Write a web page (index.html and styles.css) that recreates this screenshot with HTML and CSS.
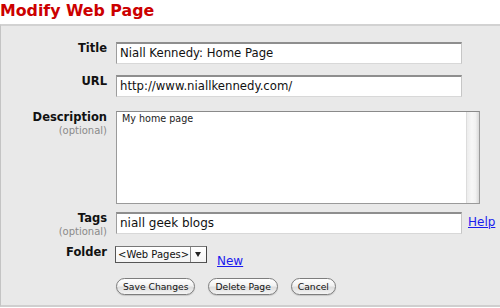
FILE: index.html
```html
<!DOCTYPE html>
<html>
<head>
<meta charset="utf-8">
<title>Modify Web Page</title>
<link rel="stylesheet" href="styles.css">
</head>
<body>
<h1 class="title">Modify Web Page</h1>
<form class="panel">
  <div class="row row-title">
    <div class="label"><span class="name">Title</span></div>
    <div class="field"><div class="input">Niall Kennedy: Home Page</div></div>
  </div>
  <div class="row row-url">
    <div class="label"><span class="name">URL</span></div>
    <div class="field"><div class="input">http://www.niallkennedy.com/</div></div>
  </div>
  <div class="row row-desc">
    <div class="label"><span class="name">Description</span><span class="opt">(optional)</span></div>
    <div class="field">
      <div class="textarea"><div class="ta-text">My home page</div><div class="scroll"></div></div>
    </div>
  </div>
  <div class="row row-tags">
    <div class="label"><span class="name">Tags</span><span class="opt">(optional)</span></div>
    <div class="field"><div class="input input-tags">niall geek blogs</div><a class="link help" href="#">Help</a></div>
  </div>
  <div class="row row-folder">
    <div class="label"><span class="name">Folder</span></div>
    <div class="field">
      <div class="select"><span class="sel-text">&lt;Web Pages&gt;</span><span class="sel-arrow"></span></div>
      <a class="link new" href="#">New</a>
    </div>
  </div>
  <div class="row row-buttons">
    <div class="label"></div>
    <div class="field buttons">
      <button type="button" class="btn">Save Changes</button>
      <button type="button" class="btn">Delete Page</button>
      <button type="button" class="btn">Cancel</button>
    </div>
  </div>
</form>
</body>
</html>
```
FILE: styles.css
```css
html, body {
  margin: 0;
  padding: 0;
  background: #ffffff;
  font-family: "DejaVu Sans", Verdana, sans-serif;
}
.title {
  margin: 0;
  padding: 1px 0 0 0;
  height: 23px;
  font-size: 15.8px;
  line-height: 20px;
  font-weight: bold;
  color: #cc0000;
}
.panel {
  display: flex;
  flex-direction: column;
  background: #e9e9e9;
  border-top: 2px solid #d2d2d2;
  border-left: 1px solid #c4c4c4;
  border-bottom: 2px solid #cfcfcf;
  padding: 16px 0 10px 0;
}
.row {
  display: flex;
  align-items: flex-start;
}
.label {
  width: 106px;
  flex: none;
  margin-right: 9px;
  display: flex;
  flex-direction: column;
  align-items: flex-end;
  text-align: right;
}
.name {
  font-weight: bold;
  font-size: 11.5px;
  line-height: 14px;
  color: #111;
  margin-top: -1px;
}
.opt {
  font-size: 10px;
  line-height: 13px;
  color: #8a8a8a;
}
.field {
  display: flex;
  align-items: flex-start;
}
.input {
  width: 346px;
  height: 22px;
  box-sizing: border-box;
  background: #fff;
  border: 1px solid #a9a9a9;
  border-top: 2px solid #8e8e8e;
  border-left-color: #9d9d9d;
  border-right-color: #c6c6c6;
  border-bottom-color: #d8d8d8;
  font-size: 11.7px;
  line-height: 18px;
  padding: 0 0 0 3px;
  color: #111;
  white-space: nowrap;
}
.input-tags {
  font-size: 12px;
}
.row-title { margin-bottom: 11px; }
.row-url { margin-bottom: 14px; }
.row-desc { margin-bottom: 8px; }
.row-tags { height: 22px; margin-bottom: 12px; }
.row-folder { height: 17px; margin-bottom: 15px; }
.textarea {
  width: 364px;
  height: 93px;
  box-sizing: border-box;
  background: #fff;
  border: 1px solid #9a9a9a;
  border-top-color: #8a8a8a;
  display: flex;
}
.ta-text {
  flex: 1;
  font-size: 9.6px;
  line-height: 12px;
  padding: 1px 0 0 5px;
  color: #222;
}
.scroll {
  width: 12px;
  flex: none;
  border-left: 1px solid #dcdcdc;
  background: linear-gradient(to right, #ececec 0%, #f7f7f7 40%, #f2f2f2 70%, #d9d9d9 100%);
}
.link {
  color: #1a1aee;
  text-decoration: underline;
  font-size: 12px;
}
.help {
  margin: 3px 0 0 6px;
  line-height: 14px;
}
.new {
  margin: 8px 0 0 10px;
  line-height: 14px;
}
.select {
  width: 92px;
  height: 17px;
  box-sizing: border-box;
  border: 1px solid #555;
  border-top-color: #777;
  border-right-color: #444;
  background: linear-gradient(#ffffff, #f4f4f4);
  display: flex;
  margin-left: -1px;
}
.sel-text {
  flex: 1;
  font-size: 10px;
  line-height: 15px;
  padding-left: 2px;
  color: #111;
  white-space: nowrap;
}
.sel-arrow {
  width: 15px;
  flex: none;
  border-left: 1px solid #888;
  position: relative;
}
.sel-arrow::after {
  content: "";
  position: absolute;
  left: 4px;
  top: 5px;
  border-left: 3.5px solid transparent;
  border-right: 3.5px solid transparent;
  border-top: 5px solid #222;
}
.buttons {
  gap: 13px;
}
.btn {
  height: 17px;
  box-sizing: border-box;
  border: 1px solid #7d7d7d;
  border-radius: 9px;
  background: linear-gradient(#ffffff 0%, #f2f2f2 45%, #dedede 55%, #f4f4f4 100%);
  font-family: "DejaVu Sans", Verdana, sans-serif;
  font-size: 9.2px;
  line-height: 14px;
  padding: 0 6px;
  color: #111;
  box-shadow: 0 1px 1px rgba(0,0,0,0.15);
}
```
